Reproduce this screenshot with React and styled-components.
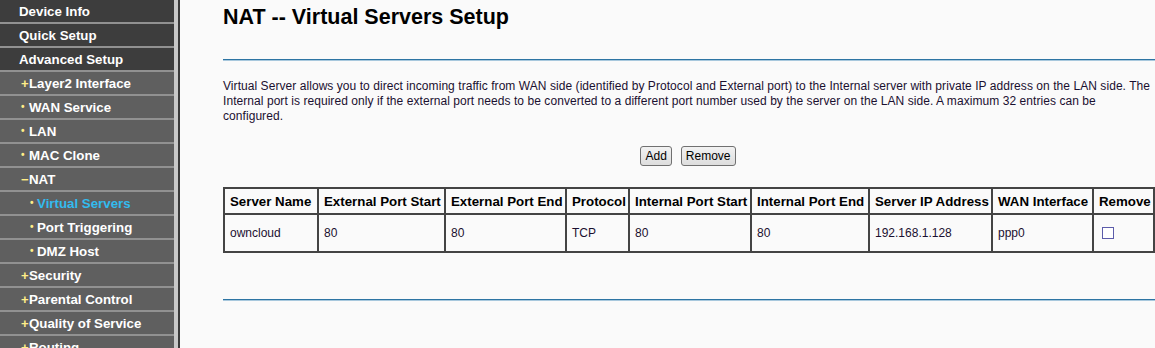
import React from "react";
import styled, { createGlobalStyle } from "styled-components";

const GlobalStyle = createGlobalStyle`
  html, body {
    margin: 0;
    padding: 0;
    background: #fafafa;
    font-family: "Liberation Sans", Arial, sans-serif;
    overflow: hidden;
  }
`;

const Page = styled.div`
  display: flex;
  height: 100vh;
`;

const Sidebar = styled.nav`
  width: 174px;
  flex-shrink: 0;
  border-right: 4px solid #c8c8c8;
  box-shadow: 2px 0 0 #3a3a3a;
  background: #c8c8c8;
`;

const MenuItem = styled.div`
  display: flex;
  align-items: center;
  height: 22px;
  border-bottom: 2px solid #919191;
  padding-left: ${(p) => (p.level === 1 ? 19 : p.level === 2 ? 21 : 30)}px;
  background: ${(p) => (p.level === 1 ? "#3d3d3d" : "#5f5f5f")};
  color: ${(p) => (p.active ? "#33bbee" : "#ffffff")};
  font-size: 13.3px;
  font-weight: bold;
  white-space: nowrap;
`;

const Marker = styled.span`
  display: inline-block;
  width: ${(p) => (p.level === 3 ? 7 : 8)}px;
  color: #ffee88;
  font-size: ${(p) => (p.kind === "dot" ? 10 : 13)}px;
  line-height: 1;
`;

const Main = styled.main`
  flex: 1;
  padding: 5px 0 0 43px;
  margin-left: 2px;
`;

const Title = styled.h1`
  margin: 0;
  font-size: 21.5px;
  line-height: 24px;
  font-weight: bold;
  color: #000;
`;

const Rule = styled.div`
  margin-top: ${(p) => p.top}px;
  height: 1px;
  background: #2d74a3;
  border-bottom: 1px solid #a8c8dd;
`;

const Intro = styled.p`
  margin: 18px 2px 0 0;
  font-size: 12px;
  line-height: 15px;
  letter-spacing: 0.06px;
  color: #1a1030;
  white-space: nowrap;
`;

const ButtonRow = styled.div`
  display: flex;
  justify-content: center;
  gap: 9px;
  margin-top: 22px;
  margin-right: 2px;
`;

const Button = styled.button`
  height: 20px;
  padding: 0 4px;
  font-family: "Liberation Sans", Arial, sans-serif;
  font-size: 12px;
  color: #000;
  background: linear-gradient(#f2f2f2, #dddddd);
  border: 1px solid #707070;
  border-radius: 3px;
`;

const Table = styled.table`
  margin-top: 21px;
  width: 930px;
  table-layout: fixed;
  border-collapse: collapse;
  border: 2px solid #444;
  font-size: 12px;
`;

const Th = styled.th`
  height: 24px;
  padding: 0 0 0 5px;
  border: 2px solid #444;
  text-align: left;
  font-size: 13.3px;
  font-weight: bold;
  color: #000;
  white-space: nowrap;
  overflow: hidden;
`;

const Td = styled.td`
  height: 36px;
  padding: 0 0 0 5px;
  border: 2px solid #444;
  color: #1a1030;
  vertical-align: middle;
`;

const Check = styled.span`
  display: block;
  width: 10px;
  height: 10px;
  margin-left: 3px;
  border: 1px solid #5c5caa;
  background: #fff;
`;

const menu = [
  { label: "Device Info", level: 1 },
  { label: "Quick Setup", level: 1 },
  { label: "Advanced Setup", level: 1 },
  { label: "Layer2 Interface", level: 2, mark: "+" },
  { label: "WAN Service", level: 2, mark: "•" },
  { label: "LAN", level: 2, mark: "•" },
  { label: "MAC Clone", level: 2, mark: "•" },
  { label: "NAT", level: 2, mark: "−" },
  { label: "Virtual Servers", level: 3, mark: "•", active: true },
  { label: "Port Triggering", level: 3, mark: "•" },
  { label: "DMZ Host", level: 3, mark: "•" },
  { label: "Security", level: 2, mark: "+" },
  { label: "Parental Control", level: 2, mark: "+" },
  { label: "Quality of Service", level: 2, mark: "+" },
  { label: "Routing", level: 2, mark: "+" },
];

const columns = [
  ["Server Name", 94],
  ["External Port Start", 127],
  ["External Port End", 121],
  ["Protocol", 63],
  ["Internal Port Start", 122],
  ["Internal Port End", 118],
  ["Server IP Address", 123],
  ["WAN Interface", 101],
  ["Remove", 61],
];

const rows = [
  ["owncloud", "80", "80", "TCP", "80", "80", "192.168.1.128", "ppp0"],
];

export default function App() {
  return (
    <>
      <GlobalStyle />
      <Page>
        <Sidebar>
          {menu.map((item) => (
            <MenuItem key={item.label} level={item.level} active={item.active}>
              {item.mark && (
                <Marker level={item.level} kind={item.mark === "•" ? "dot" : "sign"}>
                  {item.mark}
                </Marker>
              )}
              {item.label}
            </MenuItem>
          ))}
        </Sidebar>
        <Main>
          <Title>NAT -- Virtual Servers Setup</Title>
          <Rule top={30} />
          <Intro>
            Virtual Server allows you to direct incoming traffic from WAN side
            (identified by Protocol and External port) to the Internal server
            with private IP address on the LAN side. The
            <br />
            Internal port is required only if the external port needs to be
            converted to a different port number used by the server on the LAN
            side. A maximum 32 entries can be
            <br />
            configured.
          </Intro>
          <ButtonRow>
            <Button>Add</Button>
            <Button>Remove</Button>
          </ButtonRow>
          <Table>
            <colgroup>
              {columns.map(([name, w]) => (
                <col key={name} style={{ width: w }} />
              ))}
            </colgroup>
            <thead>
              <tr>
                {columns.map(([name]) => (
                  <Th key={name}>{name}</Th>
                ))}
              </tr>
            </thead>
            <tbody>
              {rows.map((r) => (
                <tr key={r[0]}>
                  {r.map((c, i) => (
                    <Td key={i}>{c}</Td>
                  ))}
                  <Td>
                    <Check />
                  </Td>
                </tr>
              ))}
            </tbody>
          </Table>
          <Rule top={46} />
        </Main>
      </Page>
    </>
  );
}
